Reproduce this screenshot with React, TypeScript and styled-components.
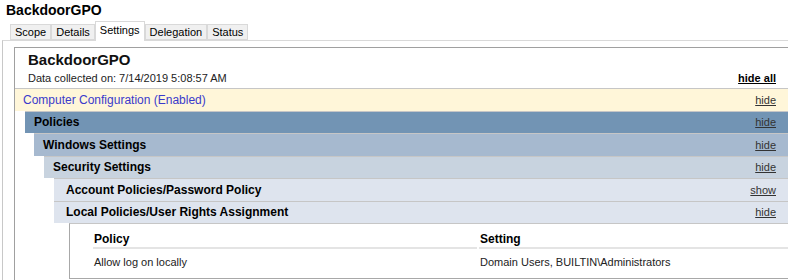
import React from "react";
import styled, { createGlobalStyle } from "styled-components";

const GlobalStyle = createGlobalStyle`
    html, body {
        margin: 0;
        padding: 0;
        background: #ffffff;
        overflow: hidden;
    }
    body {
        font-family: "Liberation Sans", Arial, sans-serif;
        color: #000;
    }
`

const Window = styled.div`
    width: 788px;
    height: 280px;
    display: flex;
    flex-direction: column;
`

const GpoTitle = styled.h1`
    margin: 0;
    height: 21px;
    padding: 2px 0 0 6px;
    box-sizing: border-box;
    font-size: 14px;
    font-weight: bold;
    line-height: 17px;
`

const TabStrip = styled.div`
    display: flex;
    align-items: flex-end;
    height: 19px;
    padding-left: 10px;
    position: relative;
    z-index: 1;
`

const Tab = styled.div<{ $active?: boolean }>`
    box-sizing: border-box;
    height: ${p => (p.$active ? "20px" : "16px")};
    margin-bottom: ${p => (p.$active ? "-1px" : "0")};
    padding: 0 4px;
    background: ${p => (p.$active ? "#ffffff" : "#f0f0f0")};
    border: 1px solid #d9d9d9;
    border-bottom: ${p => (p.$active ? "none" : "1px solid #d9d9d9")};
    font-size: 11px;
    line-height: ${p => (p.$active ? "17px" : "14px")};
    white-space: nowrap;
    & + & {
        border-left: ${p => (p.$active ? "1px solid #d9d9d9" : "none")};
    }
`

const TabPanel = styled.div`
    flex: 1;
    margin-left: 2px;
    border-left: 1px solid #c8c8c8;
    border-top: 1px solid #d9d9d9;
    padding: 6px 0 0 11px;
    display: flex;
    flex-direction: column;
    min-height: 0;
`

const Report = styled.div`
    flex: 1;
    background: #ffffff;
    border-left: 1px solid #a0a0a0;
    border-top: 1px solid #a0a0a0;
    overflow: hidden;
`

const ReportHeader = styled.div`
    padding: 1px 12px 2px 13px;
    height: 40px;
    box-sizing: border-box;
`

const ReportTitle = styled.div`
    font-size: 15px;
    font-weight: bold;
    line-height: 21px;
    color: #111;
`

const MetaLine = styled.div`
    display: flex;
    justify-content: space-between;
    align-items: baseline;
    font-size: 11px;
    line-height: 16px;
    color: #222;
`

const HideAll = styled.a`
    font-weight: bold;
    color: #000;
    text-decoration: underline;
    font-size: 11px;
`

const Section = styled.div<{ $indent: number }>`
    margin-left: ${p => p.$indent}px;
`

const Heading = styled.div<{ $bg: string; $pad: number; $color?: string; $bold?: boolean }>`
    box-sizing: border-box;
    height: 22.5px;
    display: flex;
    align-items: center;
    justify-content: space-between;
    padding: 0 12px 0 ${p => p.$pad}px;
    background: ${p => p.$bg};
    border-top: 1px solid #c6c6c6;
    color: ${p => p.$color || "#000"};
    font-size: 12px;
    font-weight: ${p => (p.$bold ? "bold" : "normal")};
    white-space: nowrap;
`

const Toggle = styled.a`
    font-size: 11px;
    font-weight: normal;
    color: #333;
    text-decoration: underline;
`

const Table = styled.div`
    margin-left: 15px;
    border-left: 1px solid #a8a8a8;
    border-top: 1px solid #c6c6c6;
    border-bottom: 1px solid #a8a8a8;
    padding: 8px 0 8px 23px;
    display: grid;
    grid-template-columns: 384px 1fr;
    column-gap: 2px;
`

const HeadCell = styled.div`
    padding-left: 1px;
    font-size: 12px;
    font-weight: bold;
    line-height: 15px;
    border-bottom: 2px solid #e4e4e4;
`

const Cell = styled.div`
    padding: 6px 0 0 1px;
    font-size: 11px;
    line-height: 15px;
    color: #222;
    white-space: nowrap;
`

const tabs = ["Scope", "Details", "Settings", "Delegation", "Status"];

const App: React.FC = () => {
    return (
        <Window>
            <GlobalStyle />
            <GpoTitle>BackdoorGPO</GpoTitle>
            <TabStrip>
                {tabs.map(t => (
                    <Tab key={t} $active={t === "Settings"}>{t}</Tab>
                ))}
            </TabStrip>
            <TabPanel>
                <Report>
                    <ReportHeader>
                        <ReportTitle>BackdoorGPO</ReportTitle>
                        <MetaLine>
                            <span>Data collected on: 7/14/2019 5:08:57 AM</span>
                            <HideAll>hide all</HideAll>
                        </MetaLine>
                    </ReportHeader>
                    <Section $indent={0}>
                        <Heading $bg="#fff6d9" $pad={8} $color="#3a3acb">
                            <span>Computer Configuration (Enabled)</span>
                            <Toggle>hide</Toggle>
                        </Heading>
                        <Section $indent={10}>
                            <Heading $bg="#7294b4" $pad={9} $bold>
                                <span>Policies</span>
                                <Toggle>hide</Toggle>
                            </Heading>
                            <Section $indent={9}>
                                <Heading $bg="#a6b9cf" $pad={9} $bold>
                                    <span>Windows Settings</span>
                                    <Toggle>hide</Toggle>
                                </Heading>
                                <Section $indent={10}>
                                    <Heading $bg="#c8d3df" $pad={9} $bold>
                                        <span>Security Settings</span>
                                        <Toggle>hide</Toggle>
                                    </Heading>
                                    <Section $indent={10}>
                                        <Heading $bg="#dee4ee" $pad={12} $bold>
                                            <span>Account Policies/Password Policy</span>
                                            <Toggle>show</Toggle>
                                        </Heading>
                                        <Heading $bg="#dee4ee" $pad={12} $bold>
                                            <span>Local Policies/User Rights Assignment</span>
                                            <Toggle>hide</Toggle>
                                        </Heading>
                                        <Table>
                                            <HeadCell>Policy</HeadCell>
                                            <HeadCell>Setting</HeadCell>
                                            <Cell>Allow log on locally</Cell>
                                            <Cell>Domain Users, BUILTIN\Administrators</Cell>
                                        </Table>
                                    </Section>
                                </Section>
                            </Section>
                        </Section>
                    </Section>
                </Report>
            </TabPanel>
        </Window>
    );
}

export default App;
